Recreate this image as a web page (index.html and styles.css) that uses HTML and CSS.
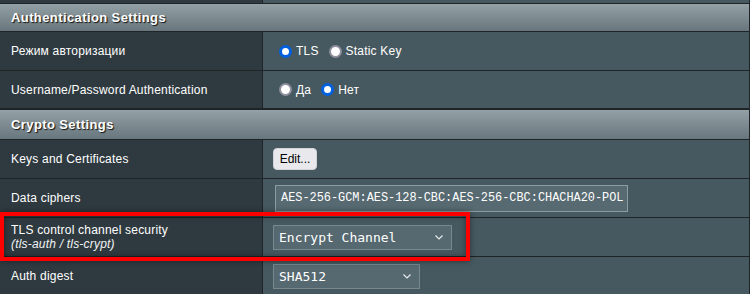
FILE: index.html
```html
<!DOCTYPE html>
<html lang="ru">
<head>
    <meta charset="UTF-8">
    <meta name="viewport" content="width=device-width, initial-scale=1.0">
    <title>VPN Client</title>
    <link rel="stylesheet" href="styles.css">
</head>
<body>
    <div class="panel">
        <div class="row strip">
            <div class="label"></div>
            <div class="value"></div>
        </div>

        <div class="head first">Authentication Settings</div>
        <div class="row">
            <div class="label">Режим авторизации</div>
            <div class="value">
                <label class="opt"><input type="radio" name="auth" checked><span>TLS</span></label>
                <label class="opt"><input type="radio" name="auth"><span>Static Key</span></label>
            </div>
        </div>
        <div class="row short">
            <div class="label">Username/Password Authentication</div>
            <div class="value">
                <label class="opt"><input type="radio" name="userauth"><span>Да</span></label>
                <label class="opt"><input type="radio" name="userauth" checked><span>Нет</span></label>
            </div>
        </div>

        <div class="head">Crypto Settings</div>
        <div class="row">
            <div class="label">Keys and Certificates</div>
            <div class="value">
                <button class="btn">Edit...</button>
            </div>
        </div>
        <div class="row">
            <div class="label">Data ciphers</div>
            <div class="value">
                <input class="text-input" type="text" value="AES-256-GCM:AES-128-CBC:AES-256-CBC:CHACHA20-POL">
            </div>
        </div>
        <div class="row">
            <div class="label">
                <div>TLS control channel security</div>
                <div class="hint">(tls-auth / tls-crypt)</div>
            </div>
            <div class="value">
                <div class="select-wrap wide">
                    <select>
                        <option>Encrypt Channel</option>
                    </select>
                    <svg class="chevron" width="8" height="5" viewBox="0 0 8 5"><path d="M0.5 0.5 L4 4 L7.5 0.5" fill="none" stroke="#e6ecee" stroke-width="1.2"/></svg>
                </div>
            </div>
        </div>
        <div class="row">
            <div class="label">Auth digest</div>
            <div class="value">
                <div class="select-wrap narrow">
                    <select>
                        <option>SHA512</option>
                    </select>
                    <svg class="chevron" width="8" height="5" viewBox="0 0 8 5"><path d="M0.5 0.5 L4 4 L7.5 0.5" fill="none" stroke="#e6ecee" stroke-width="1.2"/></svg>
                </div>
            </div>
        </div>

        <!-- выделение -->
        <div class="highlight"></div>
    </div>
</body>
</html>
```

FILE: styles.css
```css
body {
    margin: 0;
    background: #475960;
    font-family: "Liberation Sans", Arial, sans-serif;
    color: #fff;
    overflow: hidden;
}

.panel {
    position: relative;
    width: 749px;
    border-right: 1px solid #1f2427;
}

.row {
    display: grid;
    grid-template-columns: 263px 1fr;
    height: 38px;
    border-bottom: 1px solid #1f2427;
}

.row.short {
    height: 37px;
}

.row.strip {
    height: 3px;
}

.label {
    background: #2f3a40;
    border-right: 1px solid #1f2427;
    padding-left: 11px;
    display: flex;
    flex-direction: column;
    justify-content: center;
    font-size: 12px;
    letter-spacing: 0.2px;
    line-height: 14px;
}

.hint {
    font-style: italic;
    color: #f2f4f5;
}

.value {
    background: #475960;
    padding-left: 10px;
    display: flex;
    align-items: center;
}

.head {
    height: 29px;
    border-top: 1px solid #1f2427;
    border-bottom: 1px solid #1f2427;
    background: linear-gradient(#93a0a6, #68777d);
    padding-left: 11px;
    display: flex;
    align-items: center;
    font-size: 13px;
    font-weight: bold;
    letter-spacing: 0.4px;
    text-shadow: 1px 1px 1px #111;
}

.head.first {
    height: 27px;
    border-top: none;
}

.opt {
    display: flex;
    align-items: center;
    margin-left: 6px;
    margin-right: 4px;
    font-size: 12px;
    letter-spacing: 0.2px;
}

.opt input {
    appearance: none;
    width: 13px;
    height: 13px;
    margin: 0 4px 0 0;
    border-radius: 50%;
    background: #fff;
    border: 2px solid #8f8f9d;
    box-sizing: border-box;
}

.opt input:checked {
    border: 3.5px solid #0060df;
}

.btn {
    width: 44px;
    height: 22px;
    padding: 0;
    background: #e9e9ed;
    border: 1px solid #d4d4da;
    border-radius: 4px;
    font-family: "Liberation Sans", Arial, sans-serif;
    font-size: 12px;
    color: #000;
}

.text-input {
    width: 353px;
    height: 27px;
    box-sizing: border-box;
    margin-left: 2px;
    padding: 0 0 0 5px;
    background: #576a71;
    border: 1px solid #8c9ca1;
    color: #fff;
    font-family: "Liberation Mono", "DejaVu Sans Mono", monospace;
    font-size: 11.9px;
    outline: none;
}

.select-wrap {
    position: relative;
    height: 25px;
}

.select-wrap.wide { width: 179px; }
.select-wrap.narrow { width: 147px; }

.select-wrap select {
    appearance: none;
    width: 100%;
    height: 100%;
    margin: 0;
    padding: 0 0 0 5px;
    background: #566970;
    border: 1px solid #77888e;
    color: #fff;
    font-family: "DejaVu Sans Mono", "Liberation Mono", monospace;
    font-size: 13px;
    outline: none;
}

.chevron {
    position: absolute;
    right: 9px;
    top: 10px;
}

.highlight {
    position: absolute;
    left: 0;
    top: 212px;
    width: 470px;
    height: 49px;
    box-sizing: border-box;
    border: 4px solid #ff0000;
    box-shadow: 0 0 6px rgba(0, 0, 0, 0.45), inset 0 0 6px rgba(0, 0, 0, 0.45);
}
```
